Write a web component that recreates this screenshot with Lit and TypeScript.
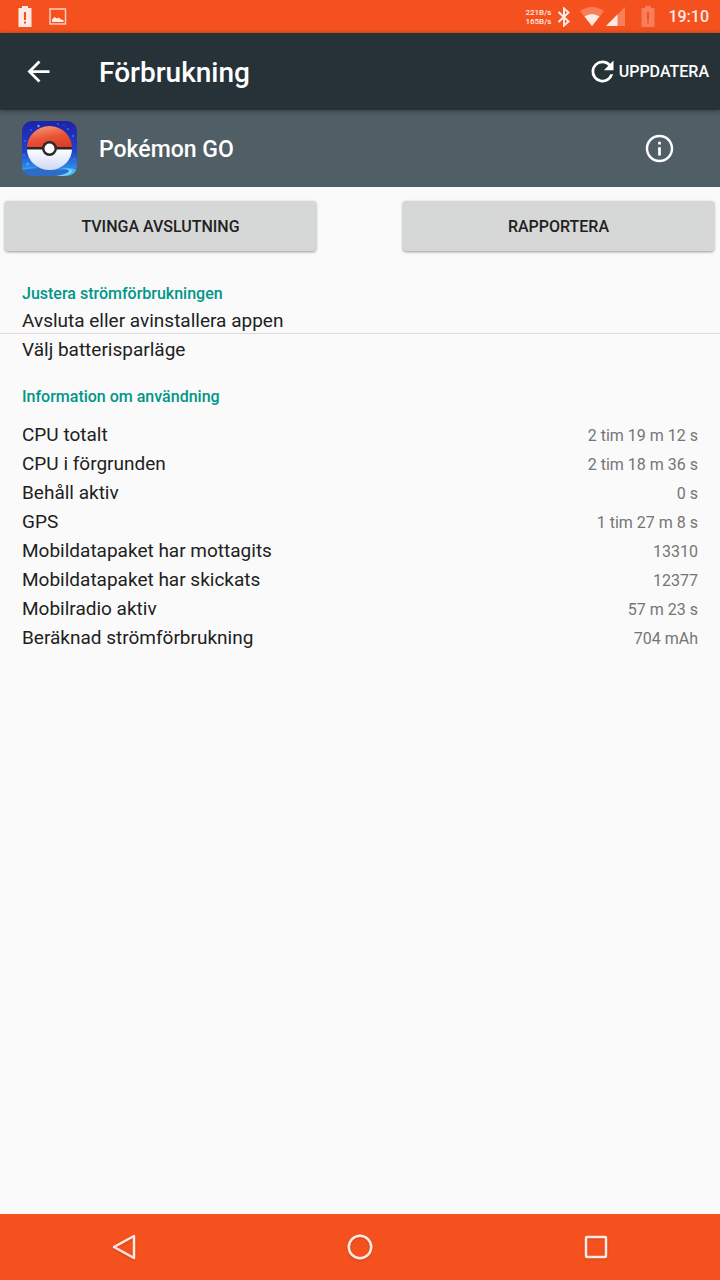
import { LitElement, html, svg, css } from "lit";
import { customElement, property } from "lit/decorators.js";

interface UsageRow {
  label: string;
  value: string;
}

const usage: UsageRow[] = [
  { label: "CPU totalt", value: "2 tim 19 m 12 s" },
  { label: "CPU i förgrunden", value: "2 tim 18 m 36 s" },
  { label: "Behåll aktiv", value: "0 s" },
  { label: "GPS", value: "1 tim 27 m 8 s" },
  { label: "Mobildatapaket har mottagits", value: "13310" },
  { label: "Mobildatapaket har skickats", value: "12377" },
  { label: "Mobilradio aktiv", value: "57 m 23 s" },
  { label: "Beräknad strömförbrukning", value: "704 mAh" },
];

const batteryShape = svg`
  <path fill="currentColor" fill-rule="evenodd"
    d="M4 0h6v2h3.500v19H0.500V2H4zM6 6v8h2V6zM6 15.500v2h2v-2z" />`;

@customElement("status-bar")
export class StatusBar extends LitElement {
  static styles = css`
    :host {
      display: flex;
      align-items: center;
      height: 33px;
      padding: 0 11px 0 18px;
      background: #f5511e;
      color: #feeae4;
      font-family: Roboto, sans-serif;
    }
    svg {
      display: block;
      flex: none;
    }
    .picture {
      margin-left: 17px;
    }
    .speed {
      margin-left: auto;
      font-size: 8px;
      line-height: 9px;
      font-weight: 500;
      text-align: right;
    }
    .bluetooth {
      margin-left: 6px;
    }
    .wifi {
      margin-left: 9px;
    }
    .signal {
      margin-left: 2px;
    }
    .battery {
      margin-left: 16px;
      opacity: 0.3;
    }
    .clock {
      margin-left: 13px;
      font-size: 16px;
      line-height: 20px;
      font-weight: 500;
    }
  `;

  render() {
    return html`
      <svg width="14" height="21" viewBox="0 0 14 21" aria-hidden="true">${batteryShape}</svg>
      <svg class="picture" width="18" height="17" viewBox="0 0 18 17" aria-hidden="true">
        <rect x="1" y="1" width="15.500" height="15" fill="none" stroke="currentColor" stroke-width="1.500" opacity="0.800" />
        <path d="M3 14V11.500L5.500 9l2.500 1.500L10 9.500l2 2 2.500.500V14z" fill="currentColor" />
      </svg>
      <div class="speed"><div>221B/s</div><div>165B/s</div></div>
      <svg class="bluetooth" width="14" height="20" viewBox="0 0 14 20" aria-hidden="true">
        <path d="M1.500 5l10 9.500L7 18.500V1.500l4.500 4L1.500 15" fill="none" stroke="currentColor" stroke-width="2" />
      </svg>
      <svg class="wifi" width="24" height="19" viewBox="0 0 24 19" aria-hidden="true">
        <path d="M0 4Q12-4 24 4L12 19z" fill="currentColor" opacity="0.300" />
        <path d="M4.500 9.500Q12 4.500 19.500 9.500L12 19z" fill="currentColor" />
      </svg>
      <svg class="signal" width="19" height="19" viewBox="0 0 19 19" aria-hidden="true">
        <path d="M19 0v19H0z" fill="currentColor" opacity="0.300" />
        <path d="M11.500 7.500V19H0z" fill="currentColor" />
      </svg>
      <svg class="battery" width="14" height="21" viewBox="0 0 14 21" aria-hidden="true">${batteryShape}</svg>
      <time class="clock">19:10</time>
    `;
  }
}

@customElement("app-bar")
export class AppBar extends LitElement {
  @property() heading = "";

  static styles = css`
    :host {
      display: flex;
      align-items: center;
      height: 77px;
      padding: 0 11px 0 22px;
      background: #273238;
      color: #fff;
      font-family: Roboto, sans-serif;
      box-shadow: 0 1px 5px rgba(0, 0, 0, 0.4);
      z-index: 1;
    }
    button {
      display: flex;
      align-items: center;
      padding: 0;
      border: 0;
      background: none;
      color: inherit;
      font: 500 16px/24px Roboto, sans-serif;
    }
    svg {
      display: block;
    }
    h1 {
      flex: 1;
      margin: 0 0 0 44px;
      padding-top: 2px;
      font-size: 28px;
      line-height: 36px;
      font-weight: 500;
    }
  `;

  render() {
    return html`
      <button aria-label="Tillbaka">
        <svg width="33" height="33" viewBox="0 0 24 24">
          <path fill="currentColor" d="M20 11H7.830l5.590-5.590L12 4l-8 8 8 8 1.410-1.410L7.830 13H20v-2z" />
        </svg>
      </button>
      <h1>${this.heading}</h1>
      <button>
        <svg width="33" height="33" viewBox="0 0 24 24" aria-hidden="true">
          <path fill="currentColor" d="M17.650 6.350A7.960 7.960 0 0 0 12 4a8 8 0 1 0 7.730 10h-2.080A6 6 0 1 1 12 6c1.660 0 3.140.690 4.220 1.780L13 11h7V4z" />
        </svg>
        <span>UPPDATERA</span>
      </button>
    `;
  }
}

@customElement("app-header")
export class AppHeader extends LitElement {
  @property() name = "";

  static styles = css`
    :host {
      display: flex;
      align-items: center;
      height: 77px;
      padding: 0 44px 0 22px;
      background: #505e65;
      color: #fff;
      font-family: Roboto, sans-serif;
    }
    svg {
      display: block;
      flex: none;
    }
    h2 {
      flex: 1;
      margin: 0 0 0 22px;
      padding-top: 2px;
      font-size: 23px;
      line-height: 30px;
      font-weight: 500;
    }
    button {
      padding: 0;
      border: 0;
      background: none;
      color: inherit;
    }
  `;

  render() {
    return html`
      <svg width="55" height="55" viewBox="0 0 55 55" aria-hidden="true">
        <defs>
          <linearGradient id="sky" x1="0" y1="0" x2="0" y2="1">
            <stop offset="0" stop-color="#1f22a6" />
            <stop offset="0.550" stop-color="#2340cc" />
            <stop offset="0.850" stop-color="#2c8bea" />
            <stop offset="1" stop-color="#2a6fd0" />
          </linearGradient>
          <linearGradient id="red" x1="0.200" y1="0" x2="0.600" y2="1">
            <stop offset="0" stop-color="#f59a78" />
            <stop offset="0.550" stop-color="#ea5236" />
            <stop offset="1" stop-color="#dd3d26" />
          </linearGradient>
          <linearGradient id="white" x1="0" y1="0" x2="0" y2="1">
            <stop offset="0" stop-color="#ffffff" />
            <stop offset="1" stop-color="#cfd8f6" />
          </linearGradient>
          <clipPath id="tile"><rect width="55" height="55" rx="10" /></clipPath>
        </defs>
        <g clip-path="url(#tile)">
          <rect width="55" height="55" fill="url(#sky)" />
          <path d="M0 48q14-3 27 0t28-1v9H0z" fill="#2f6cc8" />
          <path d="M0 47.500q8-2 16-.500-8 .500-16 2z" fill="#3f9bea" />
          <path d="M36 47.500q13-.500 13 2.500 0 3-15 5h17q4-4 4-6-4-3-19-1.500z" fill="#4fb4f2" />
          <path d="M38 47.500q9 0 9 2.500 0 2.500-12 5h5q10-2 10-5 0-3-12-2.500z" fill="#7fd6ff" />
          <g fill="#46a8f2">
            <circle cx="16.500" cy="5" r="1.300" /><circle cx="5.500" cy="43" r="1.500" />
            <circle cx="9" cy="9" r="0.700" /><circle cx="36" cy="3" r="0.700" />
            <circle cx="46" cy="8" r="0.800" /><circle cx="51" cy="15" r="0.800" />
            <circle cx="3" cy="20" r="0.700" /><circle cx="2" cy="34" r="0.800" />
            <circle cx="52" cy="38" r="0.700" /><circle cx="42" cy="4" r="0.600" />
          </g>
          <path d="M5 27a22.500 22 0 0 1 45 0z" fill="url(#red)" />
          <path d="M5 28a22.500 21 0 0 0 45 0z" fill="url(#white)" />
          <path d="M5 26h45v2.500H5z" fill="#29292b" />
          <circle cx="27.500" cy="27.500" r="7.500" fill="#29292b" />
          <circle cx="27.500" cy="27.500" r="5" fill="#fff" />
        </g>
      </svg>
      <h2>${this.name}</h2>
      <button aria-label="Appinformation">
        <svg width="33" height="33" viewBox="0 0 24 24">
          <path fill="currentColor" d="M11 17h2v-6h-2v6zm1-15C6.480 2 2 6.480 2 12s4.480 10 10 10 10-4.480 10-10S17.520 2 12 2zm0 18.200a8.200 8.200 0 1 1 0-16.400 8.200 8.200 0 0 1 0 16.400zM11 9h2V7h-2v2z" />
        </svg>
      </button>
    `;
  }
}

@customElement("nav-bar")
export class NavBar extends LitElement {
  static styles = css`
    :host {
      display: flex;
      justify-content: center;
      height: 66px;
      background: #f5511e;
      color: #feeae4;
    }
    button {
      display: flex;
      align-items: center;
      justify-content: center;
      flex: 0 1 236px;
      padding: 0;
      border: 0;
      background: none;
      color: inherit;
    }
    svg {
      filter: drop-shadow(0 1px 1px rgba(0, 0, 0, 0.15));
    }
  `;

  render() {
    return html`
      <button aria-label="Tillbaka">
        <svg width="30" height="30" viewBox="0 0 30 30">
          <path d="M25 4v22L5 15z" fill="none" stroke="currentColor" stroke-width="2.500" stroke-linejoin="round" />
        </svg>
      </button>
      <button aria-label="Hem">
        <svg width="30" height="30" viewBox="0 0 30 30">
          <circle cx="15" cy="15" r="11.200" fill="none" stroke="currentColor" stroke-width="2.500" />
        </svg>
      </button>
      <button aria-label="Översikt">
        <svg width="30" height="30" viewBox="0 0 30 30">
          <rect x="5" y="5" width="20" height="20" rx="1" fill="none" stroke="currentColor" stroke-width="2.500" />
        </svg>
      </button>
    `;
  }
}

@customElement("app-root")
export class AppRoot extends LitElement {
  static styles = css`
    :host {
      display: flex;
      flex-direction: column;
      min-height: 100vh;
      background: #fafafa;
      color: #212121;
      font-family: Roboto, sans-serif;
    }
    main {
      flex: 1;
    }
    .actions {
      display: grid;
      grid-template-columns: 1fr 1fr;
      gap: 87px;
      padding: 14px 6px 0 5px;
    }
    .action {
      height: 50px;
      padding: 2px 0 0;
      border: 0;
      border-radius: 3px;
      background: #d6d8d7;
      color: #212121;
      font: 500 16px/24px Roboto, sans-serif;
      box-shadow: 0 1px 3px rgba(0, 0, 0, 0.4);
    }
    h3 {
      margin: 0;
      padding: 0 22px;
      color: #009688;
      font-size: 16px;
      line-height: 24px;
      font-weight: 500;
    }
    .adjust {
      padding-top: 31px;
    }
    .option {
      display: block;
      width: 100%;
      padding: 3px 22px 0;
      border: 0;
      background: none;
      color: inherit;
      font: 400 19px/24px Roboto, sans-serif;
      text-align: left;
    }
    .option + .option {
      padding-top: 4px;
      border-top: 1px solid #dadada;
    }
    .usage {
      padding-top: 23px;
    }
    .table-wrap {
      padding: 12px 22px 0;
    }
    table {
      width: 100%;
      border-collapse: collapse;
    }
    th,
    td {
      height: 29px;
      padding: 0;
      vertical-align: top;
    }
    th {
      font-size: 19px;
      line-height: 27px;
      font-weight: 400;
      text-align: left;
    }
    td {
      color: #757575;
      font-size: 16px;
      line-height: 29px;
      text-align: right;
    }
  `;

  render() {
    return html`
      <status-bar></status-bar>
      <app-bar heading="Förbrukning"></app-bar>
      <app-header name="Pokémon GO"></app-header>
      <main>
        <div class="actions">
          <button class="action">TVINGA AVSLUTNING</button>
          <button class="action">RAPPORTERA</button>
        </div>
        <section class="adjust">
          <h3>Justera strömförbrukningen</h3>
          <button class="option">Avsluta eller avinstallera appen</button>
          <button class="option">Välj batterisparläge</button>
        </section>
        <section class="usage">
          <h3>Information om användning</h3>
          <div class="table-wrap">
            <table>
              <tbody>
                ${usage.map(
                  (row) => html`<tr><th scope="row">${row.label}</th><td>${row.value}</td></tr>`,
                )}
              </tbody>
            </table>
          </div>
        </section>
      </main>
      <nav-bar></nav-bar>
    `;
  }
}
